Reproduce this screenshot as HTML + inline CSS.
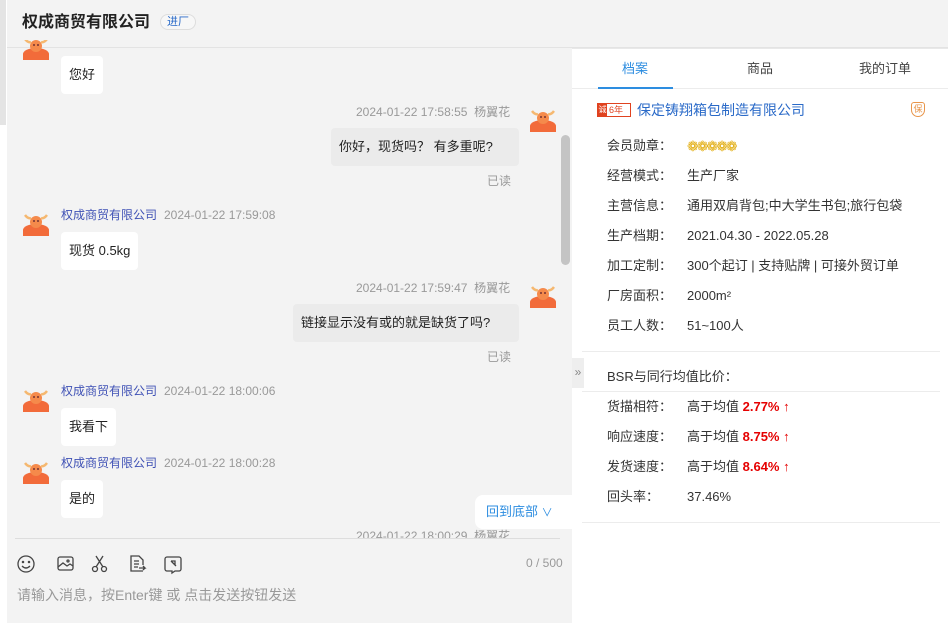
<!DOCTYPE html>
<html><head><meta charset="utf-8"><style>
*{margin:0;padding:0;box-sizing:border-box}
body{width:948px;height:623px;overflow:hidden;background:#fff;font-family:"Liberation Sans","Noto Sans CJK SC",sans-serif;font-size:13px;color:#333;position:relative}
.a{position:absolute;white-space:nowrap;line-height:18px}
.strip{left:0;top:0;width:6px;height:125px;background:#e4e4e4}
.left{left:7px;top:0;width:565px;height:623px;background:#f3f3f3}
.hdr{left:7px;top:0;width:941px;height:48px;background:#f3f3f3;border-bottom:1px solid #e3e3e3}
.bub{background:#fff;border-radius:4px;padding:0 8px;height:38px;line-height:38px;font-size:13px;color:#222}
.rb{background:#ebebeb}
.ts{color:#999;font-size:12px}
.nm{color:#3f51b5;font-size:12px}
.lab{left:607px;color:#333}
.val{left:687px;color:#333}
.red{color:#e50000;font-weight:bold}
.line{height:1px;background:#ececec}
</style></head><body>
<div class="a left"></div>
<div class="a strip"></div>
<div class="a hdr"></div>
<div class="a" style="left:22px;top:13px;font-size:16px;line-height:20px;font-weight:bold;color:#222">权成商贸有限公司</div>
<div class="a" style="left:160px;top:14px;width:36px;height:16px;border:1px solid #ddd;border-radius:9px;background:#f7f7f7;color:#2a6ac8;font-size:11px;line-height:14px;text-align:center">进厂</div>

<svg width="0" height="0" style="position:absolute"><defs><g id="av"><ellipse cx="14" cy="22" rx="13" ry="6" fill="#f26b3a"/><rect x="1" y="22" width="26" height="6" fill="#f26b3a"/><ellipse cx="14" cy="14" rx="6" ry="6" fill="#f58a4b"/><path d="M3 7 Q6 11 9 10 M25 7 Q22 11 19 10" stroke="#f5b870" stroke-width="2.5" fill="none"/><circle cx="12" cy="13" r="1" fill="#733"/><circle cx="16" cy="13" r="1" fill="#733"/></g></defs></svg>

<svg class="a" style="left:22px;top:40px" width="28" height="20"><use href="#av" y="-8"/></svg>
<div class="a bub" style="left:61px;top:56px;line-height:38px">您好</div>

<div class="a ts" style="left:356px;top:103px">2024-01-22 17:58:55 &nbsp;杨翼花</div>
<svg class="a" style="left:529px;top:104px" width="28" height="28"><use href="#av"/></svg>
<div class="a bub rb" style="left:331px;top:128px;width:188px;line-height:38px">你好，现货吗？ 有多重呢?</div>
<div class="a ts" style="left:487px;top:172px">已读</div>

<svg class="a" style="left:22px;top:208px" width="28" height="28"><use href="#av"/></svg>
<div class="a" style="left:61px;top:206px"><span class="nm">权成商贸有限公司</span> <span class="ts">&nbsp;2024-01-22 17:59:08</span></div>
<div class="a bub" style="left:61px;top:232px;line-height:38px">现货 0.5kg</div>

<div class="a ts" style="left:356px;top:279px">2024-01-22 17:59:47 &nbsp;杨翼花</div>
<svg class="a" style="left:529px;top:280px" width="28" height="28"><use href="#av"/></svg>
<div class="a bub rb" style="left:293px;top:304px;width:226px;line-height:38px">链接显示没有或的就是缺货了吗?</div>
<div class="a ts" style="left:487px;top:348px">已读</div>

<svg class="a" style="left:22px;top:384px" width="28" height="28"><use href="#av"/></svg>
<div class="a" style="left:61px;top:382px"><span class="nm">权成商贸有限公司</span> <span class="ts">&nbsp;2024-01-22 18:00:06</span></div>
<div class="a bub" style="left:61px;top:408px;line-height:38px">我看下</div>

<svg class="a" style="left:22px;top:456px" width="28" height="28"><use href="#av"/></svg>
<div class="a" style="left:61px;top:454px"><span class="nm">权成商贸有限公司</span> <span class="ts">&nbsp;2024-01-22 18:00:28</span></div>
<div class="a bub" style="left:61px;top:480px;line-height:38px">是的</div>

<div class="a" style="left:350px;top:526px;width:220px;height:12px;overflow:hidden"><div class="ts" style="position:absolute;left:6px;top:1px">2024-01-22 18:00:29 &nbsp;杨翼花</div></div>
<div class="a" style="left:15px;top:538px;width:545px;height:1px;background:#ddd"></div>

<div class="a" style="left:561px;top:135px;width:9px;height:130px;background:#c4c4c4;border-radius:5px"></div>

<div class="a" style="left:475px;top:495px;width:97px;height:34px;background:#fff;border-radius:8px 0 0 8px;color:#2d8de0;font-size:13px;line-height:34px;padding-left:11px">回到底部 <span style="font-size:11px">∨</span></div>

<svg class="a" style="left:15px;top:553px" width="175" height="22" fill="none" stroke="#444" stroke-width="1.3">
<circle cx="11" cy="11" r="8"/><circle cx="8" cy="9" r=".6" fill="#444"/><circle cx="14" cy="9" r=".6" fill="#444"/><path d="M7 13q4 4 8 0"/>
<rect x="43" y="4" width="15" height="13" rx="2"/><path d="M43 14l5-4 4 3 3-2 3 2"/><circle cx="53" cy="8" r="1"/>
<circle cx="80" cy="16" r="2.5"/><circle cx="89" cy="16" r="2.5"/><path d="M81 14L88 3M88 14L81 3"/>
<path d="M128 18h-12V3h8l4 4v5M119 8h5M119 11h5M119 14h4M124 15h6l-2-2M130 15l-2 2"/>
<path d="M152 4h12a2 2 0 012 2v10a2 2 0 01-2 2h-4l-3 2v-2h-5a2 2 0 01-2-2V6a2 2 0 012-2zM156 8l4 0l0 4M156 8l5 5"/>
</svg>
<div class="a" style="left:526px;top:554px;color:#999;font-size:12px">0 / 500</div>
<div class="a" style="left:17px;top:585px;color:#999;font-size:14px;line-height:20px">请输入消息，按Enter键 或 点击发送按钮发送</div>

<!-- right -->
<div class="a" style="left:572px;top:48px;width:376px;height:575px;background:#fff"></div>
<div class="a" style="left:572px;top:48px;width:376px;height:1px;background:#e8e8e8"></div>
<div class="a" style="left:622px;top:60px;color:#2d8de0">档案</div>
<div class="a" style="left:747px;top:60px;color:#444">商品</div>
<div class="a" style="left:859px;top:60px;color:#444">我的订单</div>
<div class="a line" style="left:572px;top:88px;width:376px"></div>
<div class="a" style="left:598px;top:87px;width:75px;height:2px;background:#2d8de0"></div>

<div class="a" style="left:597px;top:103px;width:34px;height:14px;border:1px solid #e0421f;font-size:9px;line-height:12px;color:#e0421f;display:flex;overflow:hidden"><span style="background:#e0421f;color:#fff;width:9px;text-align:center;font-size:8px">诚</span><span style="padding-left:2px">6年</span></div>
<div class="a" style="left:637px;top:101px;color:#2a6ac8;font-size:14px">保定铸翔箱包制造有限公司</div>
<div class="a" style="left:911px;top:102px;width:14px;height:15px;border:1.5px solid #e8954a;border-radius:3px 3px 7px 7px;color:#e8954a;font-size:9px;line-height:12px;text-align:center">保</div>

<div class="a lab" style="top:137px">会员勋章：</div>
<div class="a" style="left:687px;top:137px;color:#e0a800;font-size:14px;letter-spacing:-2px">❁❁❁❁❁</div>
<div class="a lab" style="top:167px">经营模式：</div><div class="a val" style="top:167px">生产厂家</div>
<div class="a lab" style="top:197px">主营信息：</div><div class="a val" style="top:197px">通用双肩背包;中大学生书包;旅行包袋</div>
<div class="a lab" style="top:227px">生产档期：</div><div class="a val" style="top:227px">2021.04.30 - 2022.05.28</div>
<div class="a lab" style="top:257px">加工定制：</div><div class="a val" style="top:257px">300个起订 | 支持贴牌 | 可接外贸订单</div>
<div class="a lab" style="top:287px">厂房面积：</div><div class="a val" style="top:287px">2000m²</div>
<div class="a lab" style="top:317px">员工人数：</div><div class="a val" style="top:317px">51~100人</div>
<div class="a line" style="left:582px;top:351px;width:358px"></div>
<div class="a" style="left:572px;top:358px;width:12px;height:30px;background:#eee;color:#888;font-size:12px;line-height:28px;text-align:center">»</div>
<div class="a lab" style="top:368px">BSR与同行均值比价：</div>
<div class="a line" style="left:582px;top:391px;width:358px"></div>
<div class="a lab" style="top:398px">货描相符：</div><div class="a val" style="top:398px">高于均值 <span class="red">2.77% ↑</span></div>
<div class="a lab" style="top:428px">响应速度：</div><div class="a val" style="top:428px">高于均值 <span class="red">8.75% ↑</span></div>
<div class="a lab" style="top:458px">发货速度：</div><div class="a val" style="top:458px">高于均值 <span class="red">8.64% ↑</span></div>
<div class="a lab" style="top:488px">回头率：</div><div class="a val" style="top:488px">37.46%</div>
<div class="a line" style="left:582px;top:522px;width:358px"></div>
</body></html>
